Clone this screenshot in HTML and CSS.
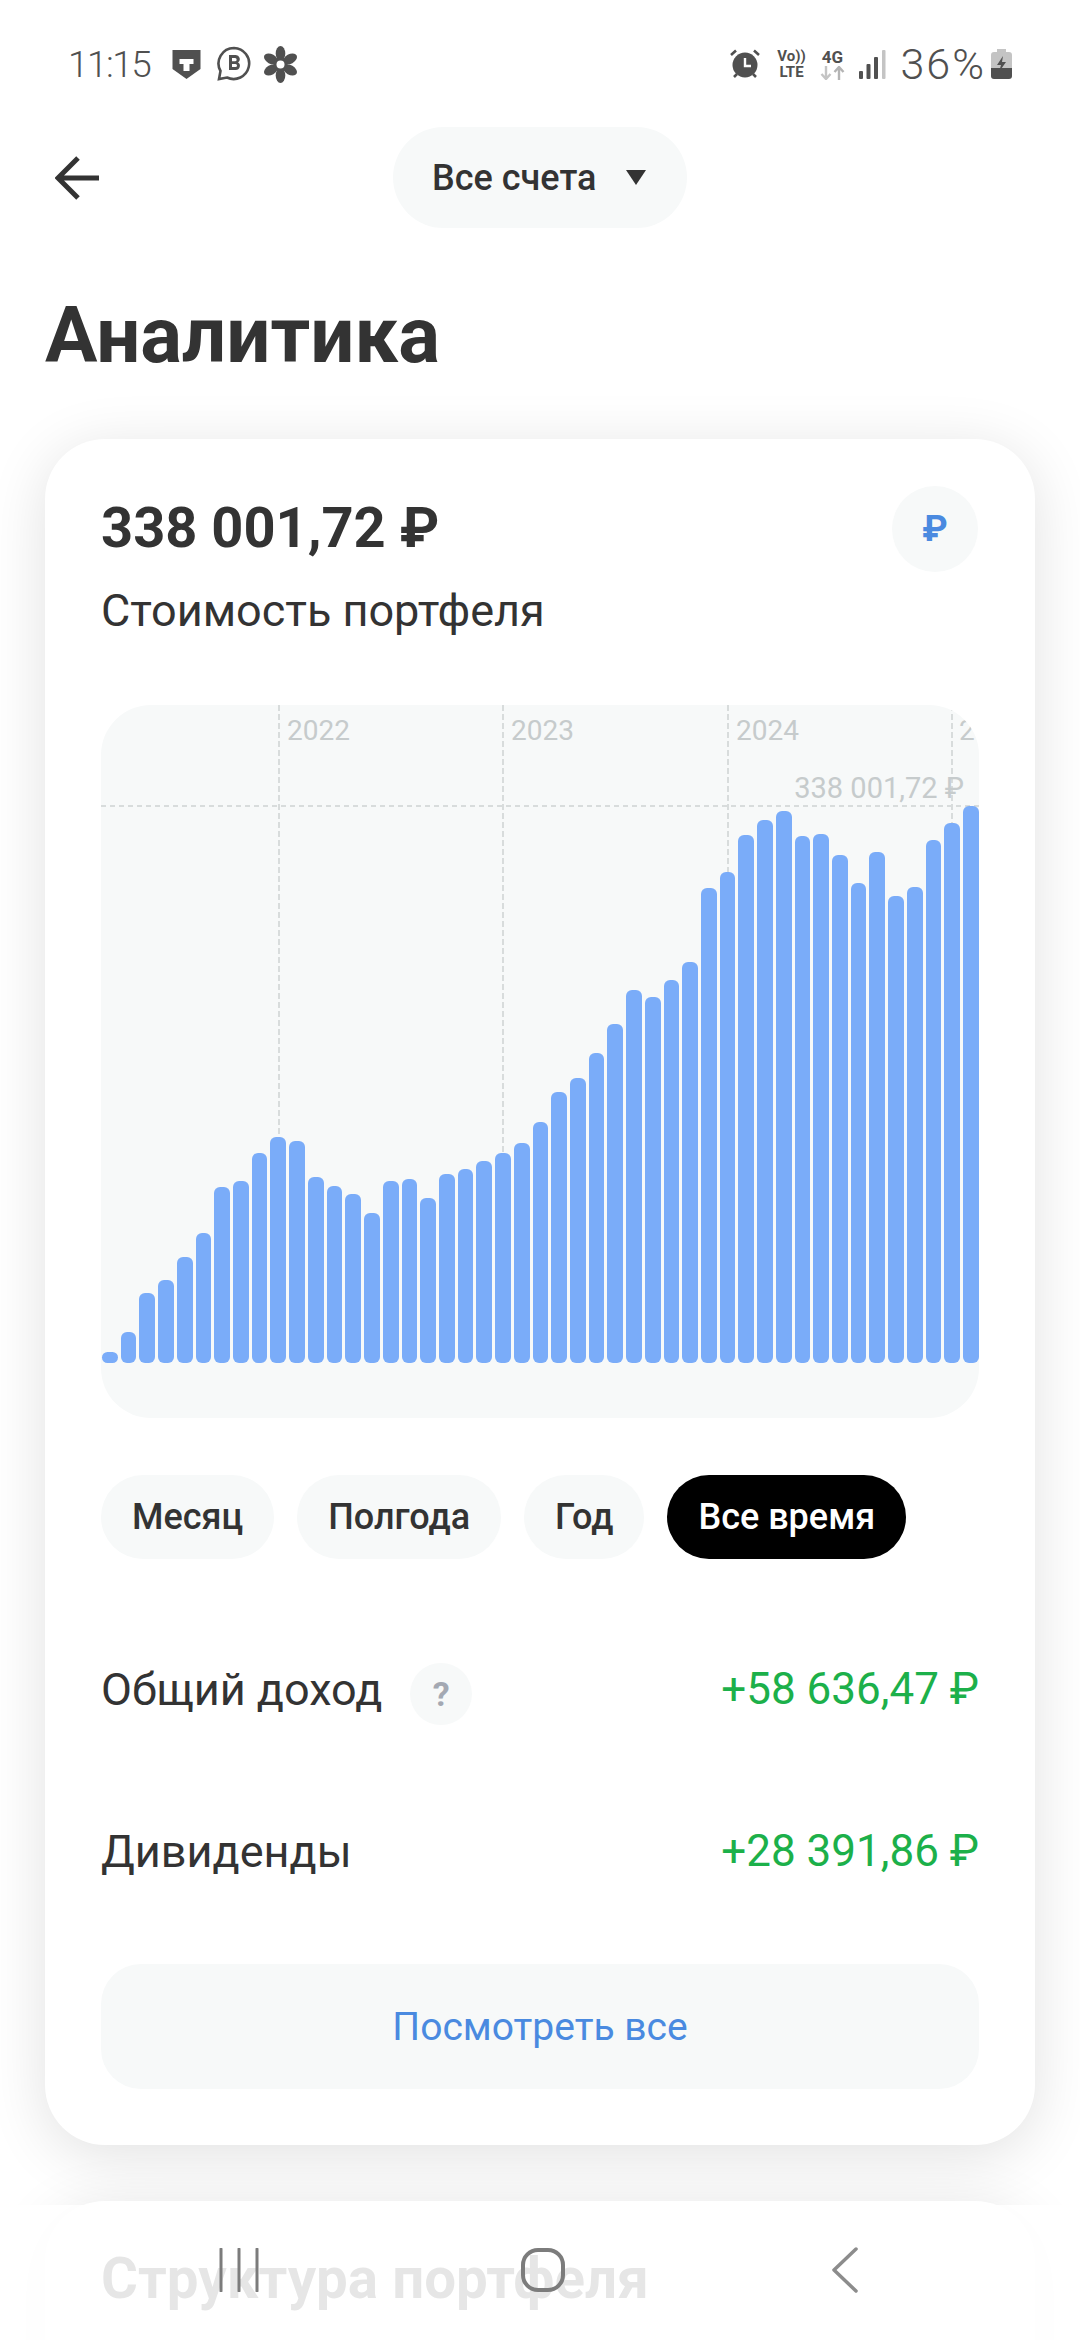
FILE: index.html
```html
<!DOCTYPE html>
<html lang="ru">
<head>
    <meta charset="UTF-8">
    <meta name="viewport" content="width=device-width, initial-scale=1.0">
    <title>Аналитика</title>
    <link rel="stylesheet" href="styles.css">
</head>
<body>
    <div class="screen">
        <div class="status-bar">
            <div class="status-left">
                <span class="status-time">11:15</span>
                <svg class="ic-shield" viewBox="0 0 28 29"><path d="M0 0H28V19L14 29L0 19Z" fill="#505050"/><path d="M7 9H21V14H17V21H11V14H7Z" fill="#fff"/></svg>
                <svg class="ic-bubble" viewBox="0 0 34 36"><path d="M17 2A15.5 15.5 0 1 1 10 31.5L2 33L3.5 25A15.5 15.5 0 0 1 17 2Z" fill="none" stroke="#505050" stroke-width="2.6"/><path d="M12 9H18.500A4 4 0 0 1 21 16.300A4.200 4.200 0 0 1 18.800 24H12ZM15 12V15.300H18A1.650 1.650 0 0 0 18 12ZM15 18V21H18.500A1.500 1.500 0 0 0 18.500 18Z" fill="#505050" fill-rule="evenodd"/></svg>
                <svg class="ic-flower" viewBox="0 0 35 37"><g fill="#505050"><ellipse cx="17.500" cy="7.500" rx="4.800" ry="7.500"/><ellipse cx="17.500" cy="7.500" rx="4.800" ry="7.500" transform="rotate(60 17.500 18.500)"/><ellipse cx="17.500" cy="7.500" rx="4.800" ry="7.500" transform="rotate(120 17.500 18.500)"/><ellipse cx="17.500" cy="7.500" rx="4.800" ry="7.500" transform="rotate(180 17.500 18.500)"/><ellipse cx="17.500" cy="7.500" rx="4.800" ry="7.500" transform="rotate(240 17.500 18.500)"/><ellipse cx="17.500" cy="7.500" rx="4.800" ry="7.500" transform="rotate(300 17.500 18.500)"/><circle cx="17.500" cy="18.500" r="7"/></g><circle cx="17.500" cy="18.500" r="4" fill="#fff"/></svg>
            </div>
            <div class="status-right">
                <svg class="ic-alarm" viewBox="0 0 30 30"><path d="M1 6L6 1.500M29 6L24 1.500" stroke="#505050" stroke-width="2.600" fill="none"/><path d="M4 28L7 25M26 28L23 25" stroke="#505050" stroke-width="2.600"/><circle cx="15" cy="16" r="12.500" fill="#505050"/><path d="M15 9V17H21" stroke="#fff" stroke-width="2.400" fill="none"/></svg>
                <div class="net-volte"><span>Vo))</span><span>LTE</span></div>
                <div class="net-4g"><span>4G</span><svg viewBox="0 0 25 14"><path d="M6 0V12M1.500 8L6 13L10.500 8" stroke="#c4c4c4" stroke-width="2.400" fill="none"/><path d="M19 14V2M14.500 6L19 1L23.500 6" stroke="#b4b4b4" stroke-width="2.400" fill="none"/></svg></div>
                <svg class="ic-signal" viewBox="0 0 27 29"><rect x="0" y="21" width="4" height="8" rx="1" fill="#505050"/><rect x="7.500" y="14" width="4" height="15" rx="1" fill="#505050"/><rect x="15" y="7" width="4" height="22" rx="1" fill="#505050"/><rect x="23" y="0" width="3.500" height="29" rx="1" fill="#c4c4c4"/></svg>
                <span class="status-batt">36%</span>
                <svg class="ic-battery" viewBox="0 0 21 30"><path d="M6 0H15V3H18A3 3 0 0 1 21 6V19H0V6A3 3 0 0 1 3 3H6Z" fill="#c4c4c4"/><path d="M0 19H21V27A3 3 0 0 1 18 30H3A3 3 0 0 1 0 27Z" fill="#505050"/><path d="M12 7L6 16H10L8 23L15 13H11Z" fill="#505050"/></svg>
            </div>
        </div>

        <div class="top-nav">
            <svg class="back-arrow" viewBox="0 0 44 44"><path d="M44 22H3M23 2L3 22L23 42" fill="none" stroke="#333" stroke-width="5"/></svg>
            <div class="account-pill"><span>Все счета</span><i class="tri"></i></div>
        </div>

        <h1 class="page-title">Аналитика</h1>

        <section class="card">
            <div class="total-head">
                <div>
                    <div class="total-sum">338 001,72 ₽</div>
                    <div class="total-label">Стоимость портфеля</div>
                </div>
                <div class="currency-btn">₽</div>
            </div>

            <div class="chart">
                <div class="grid-v gv1"></div>
                <div class="grid-v gv2"></div>
                <div class="grid-v gv3"></div>
                <div class="grid-v gv4"></div>
                <div class="grid-h"></div>
                <span class="year y1">2022</span>
                <span class="year y2">2023</span>
                <span class="year y3">2024</span>
                <span class="year y4">2025</span>
                <span class="last-value">338 001,72 ₽</span>
                <div class="bars">
                    <div class="bar" style="height:11px"></div>
                    <div class="bar" style="height:31px"></div>
                    <div class="bar" style="height:70px"></div>
                    <div class="bar" style="height:83px"></div>
                    <div class="bar" style="height:106px"></div>
                    <div class="bar" style="height:130px"></div>
                    <div class="bar" style="height:176px"></div>
                    <div class="bar" style="height:182px"></div>
                    <div class="bar" style="height:210px"></div>
                    <div class="bar" style="height:226px"></div>
                    <div class="bar" style="height:222px"></div>
                    <div class="bar" style="height:186px"></div>
                    <div class="bar" style="height:177px"></div>
                    <div class="bar" style="height:169px"></div>
                    <div class="bar" style="height:150px"></div>
                    <div class="bar" style="height:182px"></div>
                    <div class="bar" style="height:184px"></div>
                    <div class="bar" style="height:165px"></div>
                    <div class="bar" style="height:189px"></div>
                    <div class="bar" style="height:194px"></div>
                    <div class="bar" style="height:202px"></div>
                    <div class="bar" style="height:210px"></div>
                    <div class="bar" style="height:220px"></div>
                    <div class="bar" style="height:241px"></div>
                    <div class="bar" style="height:271px"></div>
                    <div class="bar" style="height:285px"></div>
                    <div class="bar" style="height:310px"></div>
                    <div class="bar" style="height:339px"></div>
                    <div class="bar" style="height:373px"></div>
                    <div class="bar" style="height:366px"></div>
                    <div class="bar" style="height:383px"></div>
                    <div class="bar" style="height:401px"></div>
                    <div class="bar" style="height:475px"></div>
                    <div class="bar" style="height:491px"></div>
                    <div class="bar" style="height:528px"></div>
                    <div class="bar" style="height:543px"></div>
                    <div class="bar" style="height:552px"></div>
                    <div class="bar" style="height:527px"></div>
                    <div class="bar" style="height:529px"></div>
                    <div class="bar" style="height:508px"></div>
                    <div class="bar" style="height:480px"></div>
                    <div class="bar" style="height:511px"></div>
                    <div class="bar" style="height:467px"></div>
                    <div class="bar" style="height:476px"></div>
                    <div class="bar" style="height:523px"></div>
                    <div class="bar" style="height:540px"></div>
                    <div class="bar" style="height:557px"></div>
                </div>
            </div>

            <div class="periods">
                <div class="period">Месяц</div>
                <div class="period">Полгода</div>
                <div class="period">Год</div>
                <div class="period active">Все время</div>
            </div>

            <div class="stat-row first">
                <div class="stat-name">Общий доход <span class="hint">?</span></div>
                <div class="stat-value">+58 636,47 ₽</div>
            </div>
            <div class="stat-row second">
                <div class="stat-name">Дивиденды</div>
                <div class="stat-value">+28 391,86 ₽</div>
            </div>

            <div class="more-btn">Посмотреть все</div>
        </section>

        <section class="card next-card">
            <h2>Структура портфеля</h2>
        </section>

        <div class="nav-bar">
            <svg class="nav-recent" viewBox="0 0 40 44"><path d="M2 1V43M20 1V43M38 1V43" stroke="#7c7c7c" stroke-width="3" stroke-linecap="round"/></svg>
            <svg class="nav-home" viewBox="0 0 44 44"><rect x="2" y="2" width="40" height="40" rx="15" fill="none" stroke="#7c7c7c" stroke-width="4"/></svg>
            <svg class="nav-back" viewBox="0 0 26 46"><path d="M24 2L2 23L24 44" fill="none" stroke="#8c8c8c" stroke-width="3.500" stroke-linecap="round" stroke-linejoin="round"/></svg>
        </div>
    </div>
</body>
</html>
```

FILE: styles.css
```css
* {
    box-sizing: border-box;
}
body {
    margin: 0;
    background: #fff;
    font-family: 'Roboto', 'Noto Sans', sans-serif;
    color: #333;
}
.screen {
    position: relative;
    width: 1080px;
    height: 2340px;
    overflow: hidden;
    background: #fff;
}

/* status bar */
.status-bar {
    height: 127px;
    padding: 45px 68px 0 68px;
    display: flex;
    justify-content: space-between;
    align-items: flex-start;
    color: #505050;
}
.status-left, .status-right {
    display: flex;
    align-items: center;
    height: 38px;
}
.status-time {
    font-size: 37px;
    font-weight: 300;
    letter-spacing: -1.5px;
    width: 104px;
}
.ic-shield { width: 29px; height: 29px; margin-right: 15px; }
.ic-bubble { width: 36px; height: 36px; margin-right: 11px; }
.ic-flower { width: 35px; height: 37px; }
.ic-alarm { width: 30px; height: 30px; margin-right: 16px; }
.net-volte {
    width: 32px;
    margin-right: 12px;
    font-size: 15px;
    line-height: 16px;
    font-weight: 700;
    display: flex;
    flex-direction: column;
    align-items: center;
    white-space: nowrap;
}
.net-4g {
    width: 26px;
    margin-right: 13px;
    font-size: 17px;
    line-height: 17px;
    font-weight: 700;
    display: flex;
    flex-direction: column;
    align-items: center;
}
.net-4g svg { width: 25px; height: 14px; }
.ic-signal { width: 27px; height: 29px; margin-right: 15px; }
.status-batt {
    font-size: 43px;
    font-weight: 300;
    letter-spacing: 2px;
    margin-right: 5px;
}
.ic-battery { width: 21px; height: 30px; }

/* back + account */
.top-nav {
    position: relative;
    height: 101px;
    display: flex;
    justify-content: center;
}
.back-arrow {
    position: absolute;
    left: 55px;
    top: 29px;
    width: 44px;
    height: 44px;
}
.account-pill {
    width: 294px;
    height: 101px;
    padding: 0 41px 0 39px;
    border-radius: 51px;
    background: #f7f9f9;
    display: flex;
    align-items: center;
    justify-content: space-between;
    font-size: 36px;
    font-weight: 500;
}
.tri {
    width: 0;
    height: 0;
    border-left: 10px solid transparent;
    border-right: 10px solid transparent;
    border-top: 15px solid #333;
}
.page-title {
    margin: 66px 0 0 45px;
    height: 145px;
    font-size: 78px;
    line-height: 84px;
    font-weight: 700;
}

/* card */
.card {
    margin: 0 45px;
    padding: 45px 56px;
    height: 1706px;
    background: #fff;
    border-radius: 60px;
    box-shadow: 0 10px 60px rgba(0, 0, 0, 0.12);
}
.total-head {
    height: 221px;
    padding-right: 1px;
    display: flex;
    justify-content: space-between;
    align-items: flex-start;
}
.total-sum {
    font-size: 56px;
    line-height: 64px;
    font-weight: 700;
    margin-top: 12px;
}
.total-label {
    font-size: 45px;
    line-height: 48px;
    margin-top: 27px;
}
.currency-btn {
    width: 86px;
    height: 86px;
    margin-top: 2px;
    border-radius: 50%;
    background: #f7f9f9;
    display: flex;
    align-items: center;
    justify-content: center;
    color: #4a8ae0;
    font-size: 36px;
    font-weight: 700;
}

/* chart */
.chart {
    position: relative;
    height: 713px;
    background: #f7f9f9;
    border-radius: 50px;
    overflow: hidden;
}
.grid-v {
    position: absolute;
    top: 0;
    bottom: 60px;
    width: 2px;
    background: repeating-linear-gradient(to bottom, #d8dcdc 0, #d8dcdc 6px, transparent 6px, transparent 9px);
}
.gv1 { left: 177px; }
.gv2 { left: 401px; }
.gv3 { left: 626px; }
.gv4 { left: 850px; }
.grid-h {
    position: absolute;
    left: 0;
    right: 0;
    top: 100px;
    height: 2px;
    background: repeating-linear-gradient(to right, #d8dcdc 0, #d8dcdc 5px, transparent 5px, transparent 9px);
}
.year, .last-value {
    position: absolute;
    font-size: 28px;
    line-height: 32px;
    color: #c6cbcc;
    white-space: nowrap;
}
.year { top: 10px; }
.y1 { left: 186px; }
.y2 { left: 410px; }
.y3 { left: 635px; }
.y4 { left: 858px; }
.last-value { right: 15px; top: 67px; font-size: 29px; }
.bars {
    position: absolute;
    left: 1px;
    right: 0;
    bottom: 55px;
    display: flex;
    align-items: flex-end;
    gap: 3px;
}
.bar {
    flex: 1;
    background: #7aacf9;
    border-radius: 6px;
}

/* periods */
.periods {
    margin-top: 57px;
    display: flex;
    gap: 23px;
}
.period {
    height: 84px;
    padding: 0 31px;
    border-radius: 42px;
    background: #f7f9f9;
    display: flex;
    align-items: center;
    font-size: 36px;
    font-weight: 500;
}
.period.active {
    background: #000;
    color: #fff;
}

/* rows */
.stat-row {
    height: 84px;
    display: flex;
    justify-content: space-between;
    align-items: center;
    font-size: 45px;
}
.stat-row.first {
    margin-top: 88px;
}
.stat-row.second {
    margin-top: 78px;
}
.stat-name {
    display: flex;
    align-items: center;
}
.hint {
    width: 62px;
    height: 62px;
    margin: 10px 0 0 28px;
    border-radius: 50%;
    background: #f7f9f9;
    color: #a4a9b3;
    font-size: 34px;
    font-weight: 700;
    display: flex;
    align-items: center;
    justify-content: center;
}
.stat-value {
    color: #1cb04a;
    font-size: 44px;
}
.more-btn {
    height: 125px;
    margin-top: 71px;
    border-radius: 40px;
    background: #f7f9f9;
    color: #4a8ae0;
    font-size: 39px;
    display: flex;
    align-items: center;
    justify-content: center;
}

/* next card, mostly under the nav bar */
.next-card {
    margin-top: 56px;
    height: 400px;
    padding-top: 48px;
}
.next-card h2 {
    margin: 0;
    font-size: 56.500px;
    line-height: 60px;
    font-weight: 700;
}

/* system nav */
.nav-bar {
    position: absolute;
    left: 0;
    right: 0;
    bottom: 0;
    height: 135px;
    background: rgba(255, 255, 255, 0.88);
    display: flex;
    align-items: center;
}
.nav-recent { position: absolute; left: 219px; top: 43px; width: 40px; height: 44px; }
.nav-home { position: absolute; left: 521px; top: 43px; width: 44px; height: 44px; }
.nav-back { position: absolute; left: 832px; top: 42px; width: 26px; height: 46px; }
```
